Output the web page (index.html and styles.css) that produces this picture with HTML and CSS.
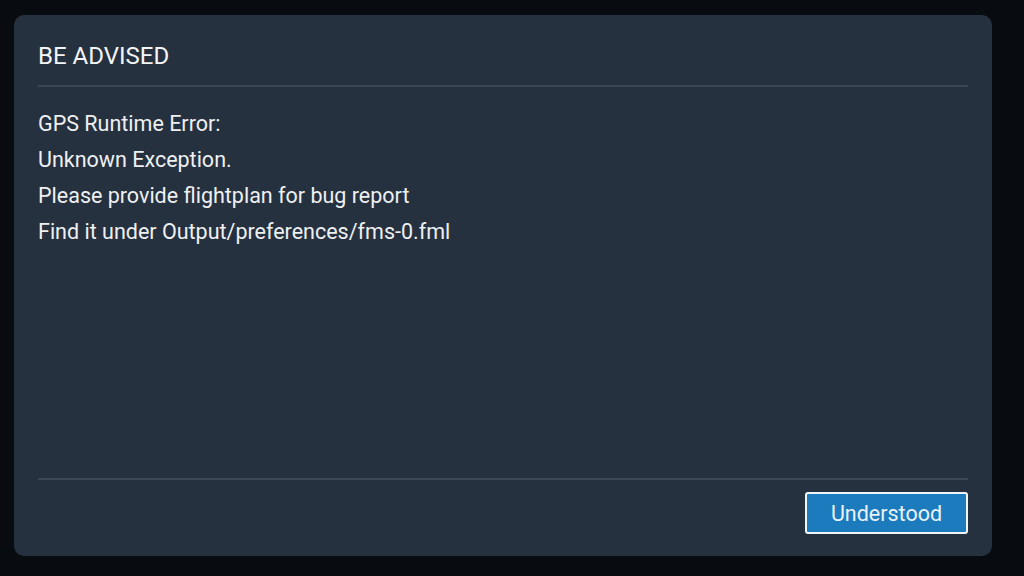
FILE: index.html
```html
<!DOCTYPE html>
<html>
<head>
<meta charset="utf-8">
<link rel="stylesheet" href="styles.css">
</head>
<body>
<div class="page">
  <div class="dialog">
    <div class="title">BE ADVISED</div>
    <div class="sep"></div>
    <div class="body">
      <div class="line">GPS Runtime Error:</div>
      <div class="line">Unknown Exception.</div>
      <div class="line">Please provide flightplan for bug report</div>
      <div class="line">Find it under Output/preferences/fms-0.fml</div>
    </div>
    <div class="sep"></div>
    <div class="footer">
      <button class="btn">Understood</button>
    </div>
  </div>
</div>
</body>
</html>
```

FILE: styles.css
```css
html, body {
  margin: 0;
  padding: 0;
  background: #080b10;
  width: 1024px;
  height: 576px;
  overflow: hidden;
  font-family: Roboto, "Noto Sans", sans-serif;
}
.page {
  padding: 15px 32px 20px 14px;
  height: 576px;
  box-sizing: border-box;
}
.dialog {
  background: #263140;
  border-radius: 10px;
  height: 541px;
  box-sizing: border-box;
  padding: 0 24px 0 24px;
  display: flex;
  flex-direction: column;
}
.title {
  color: #f2f4f6;
  font-size: 24px;
  line-height: 28px;
  padding-top: 27px;
  height: 70px;
  box-sizing: border-box;
}
.sep {
  height: 2px;
  background: #3b4754;
  flex-shrink: 0;
}
.body {
  flex: 1;
  padding-top: 19px;
  color: #eef0f2;
  font-size: 21.5px;
}
.line {
  height: 36px;
  line-height: 36px;
}
.footer {
  display: flex;
  justify-content: flex-end;
  padding: 12px 0 22px;
}
.btn {
  width: 163px;
  height: 42px;
  background: #1b7bbd;
  border: 2px solid #f1f4f7;
  border-radius: 3px;
  color: #e8f2fa;
  font-family: Roboto, "Noto Sans", sans-serif;
  font-size: 21.5px;
  padding: 0;
}
```
